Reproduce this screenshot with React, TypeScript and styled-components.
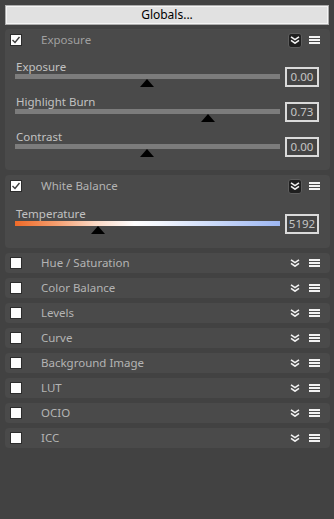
import styled, { createGlobalStyle } from 'styled-components';

const GlobalStyle = createGlobalStyle`
  html, body {
    margin: 0;
    background: #424242;
  }
  body {
    font-family: "Noto Sans", "Open Sans", sans-serif;
    font-size: 11.5px;
  }
`;

const Page = styled.div`
  display: flex;
  flex-direction: column;
  gap: 5px;
  padding: 5px 4px 5px 5px;
  min-height: 519px;
  box-sizing: border-box;
`;

const GlobalsButton = styled.button`
  height: 20px;
  width: 324px;
  margin-bottom: -1px;
  box-sizing: border-box;
  background: #e1e1e1;
  border: 1px solid #adadad;
  box-shadow: inset 0 0 0 1px #f4f4f4;
  color: #000;
  font-family: inherit;
  font-size: 12px;
  padding: 0;
  line-height: 16px;
`;

const Panel = styled.div`
  background: #4a4a4a;
  border-radius: 4px;
`;

const Header = styled.div<{ $height: number }>`
  height: ${(p) => p.$height}px;
  display: flex;
  align-items: center;
  padding: 0 10px 0 5px;
`;

const Check = styled.span`
  width: 12px;
  height: 12px;
  box-sizing: border-box;
  background: #fdfdfd;
  border: 1px solid #2c2c2c;
  display: flex;
  align-items: center;
  justify-content: center;
  flex-shrink: 0;
`;

const Title = styled.span<{ $dim?: boolean }>`
  margin-left: 19px;
  flex: 1;
  color: ${(p) => (p.$dim ? '#a0a0a0' : '#b4b4b4')};
  line-height: 16px;
  white-space: nowrap;
`;

const Chevron = styled.span<{ $boxed?: boolean }>`
  width: 14px;
  height: 15px;
  box-sizing: border-box;
  display: flex;
  align-items: center;
  justify-content: center;
  border-radius: 3px;
  background: ${(p) => (p.$boxed ? '#1f1f1f' : 'transparent')};
  border: 1px solid ${(p) => (p.$boxed ? '#5c5c5c' : 'transparent')};
`;

const Menu = styled.span`
  margin-left: 7px;
  width: 11px;
  display: flex;
  flex-direction: column;
  gap: 1px;

  & > i {
    display: block;
    height: 2px;
    background: #f2f2f2;
  }
`;

const Body = styled.div<{ $top: number; $bottom: number }>`
  display: flex;
  flex-direction: column;
  gap: 8px;
  padding: ${(p) => p.$top}px 11px ${(p) => p.$bottom}px 10px;
`;

const SliderRow = styled.div`
  display: grid;
  grid-template-columns: 1fr 34px;
  column-gap: 5px;
  align-items: end;
`;

const SliderCol = styled.div`
  display: flex;
  flex-direction: column;
`;

const Label = styled.span`
  color: #c2c2c2;
  line-height: 14px;
  height: 14px;
  padding-left: 1px;
  white-space: nowrap;
`;

const Track = styled.div<{ $gradient?: boolean }>`
  position: relative;
  height: 5px;
  margin-bottom: 8px;
  background: ${(p) =>
    p.$gradient
      ? 'linear-gradient(to right, #ef6a28 0%, #f59c6c 15%, #fbd8c4 30%, #ffffff 45%, #f2f6fe 55%, #c6d6f8 78%, #9db7f2 100%)'
      : '#7c7c7c'};
`;

const Thumb = styled.span`
  position: absolute;
  top: 5px;
  width: 0;
  height: 0;
  margin-left: -7.5px;
  border-left: 7.5px solid transparent;
  border-right: 7.5px solid transparent;
  border-bottom: 8px solid #000;
`;

const ValueBox = styled.div`
  height: 20px;
  box-sizing: border-box;
  border: 2px solid #dadada;
  background: #444;
  color: #c4c4c4;
  text-align: center;
  line-height: 16px;
`;

function Checkbox({ checked }: { checked: boolean }) {
  return (
    <Check>
      {checked && (
        <svg width="10" height="10" viewBox="0 0 10 10">
          <polyline points="1.5,5 4,7.5 8.5,2" fill="none" stroke="#3a3a3a" strokeWidth="1.4" />
        </svg>
      )}
    </Check>
  );
}

function Icons({ expanded }: { expanded: boolean }) {
  return (
    <>
      <Chevron $boxed={expanded}>
        <svg width="10" height="8" viewBox="0 0 10 8">
          <polyline points="1,0.8 5,3.6 9,0.8" fill="none" stroke="#f2f2f2" strokeWidth="1.6" />
          <polyline points="1,4.4 5,7.2 9,4.4" fill="none" stroke="#f2f2f2" strokeWidth="1.6" />
        </svg>
      </Chevron>
      <Menu>
        <i />
        <i />
        <i />
      </Menu>
    </>
  );
}

interface SliderProps {
  label: string;
  value: string;
  pos: number;
  gradient?: boolean;
}

function Slider({ label, value, pos, gradient }: SliderProps) {
  return (
    <SliderRow>
      <SliderCol>
        <Label>{label}</Label>
        <Track $gradient={gradient}>
          <Thumb style={{ left: `${pos * 100}%` }} />
        </Track>
      </SliderCol>
      <ValueBox>{value}</ValueBox>
    </SliderRow>
  );
}

const collapsed = [
  'Hue / Saturation',
  'Color Balance',
  'Levels',
  'Curve',
  'Background Image',
  'LUT',
  'OCIO',
  'ICC',
];

export default function App() {
  return (
    <>
      <GlobalStyle />
      <Page>
        <GlobalsButton>Globals...</GlobalsButton>

        <Panel>
          <Header $height={22}>
            <Checkbox checked />
            <Title $dim>Exposure</Title>
            <Icons expanded />
          </Header>
          <Body $top={9} $bottom={13}>
            <Slider label="Exposure" value="0.00" pos={0.5} />
            <Slider label="Highlight Burn" value="0.73" pos={0.73} />
            <Slider label="Contrast" value="0.00" pos={0.5} />
          </Body>
        </Panel>

        <Panel>
          <Header $height={22}>
            <Checkbox checked />
            <Title>White Balance</Title>
            <Icons expanded />
          </Header>
          <Body $top={10} $bottom={14}>
            <Slider label="Temperature" value="5192" pos={0.315} gradient />
          </Body>
        </Panel>

        {collapsed.map((name) => (
          <Panel key={name}>
            <Header $height={20}>
              <Checkbox checked={false} />
              <Title>{name}</Title>
              <Icons expanded={false} />
            </Header>
          </Panel>
        ))}
      </Page>
    </>
  );
}
